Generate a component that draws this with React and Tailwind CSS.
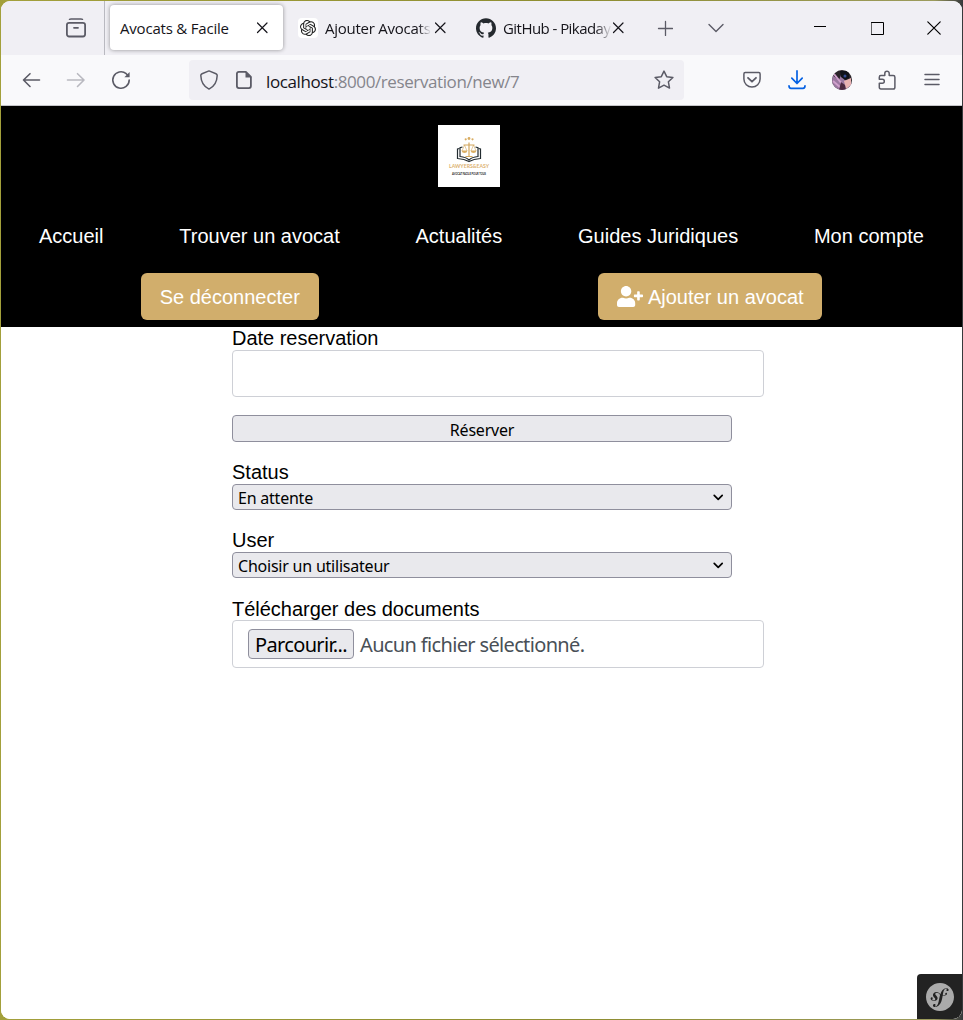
import React from "react";
import { SiOpenai, SiSymfony, SiGithub } from "react-icons/si";
import { FaUserPlus } from "react-icons/fa";

function Icon({ size = 20, className = "", sw = 1.4, children }) {
  return (
    <svg width={size} height={size} viewBox={`0 0 ${size} ${size}`} fill="none" stroke="currentColor" strokeWidth={sw} strokeLinecap="round" strokeLinejoin="round" className={`shrink-0 ${className}`}>
      {children}
    </svg>
  );
}

const CloseX = ({ className = "" }) => (
  <Icon size={12} sw={1.2} className={`text-[#15141a] ${className}`}>
    <path d="M1.500 1l9.500 9.500M11 1L1.500 10.500" />
  </Icon>
);

function TabBar() {
  return (
    <div className="flex h-[54px] shrink-0 items-center bg-[#f0eff4] text-[#5b5b66]">
      <div className="flex h-full w-[104px] shrink-0 items-center border-r border-[#b9b9c0] pl-[65px]">
        <Icon sw={1.8}>
          <path d="M3.500 1.300Q4.200.9 5 .9H15Q15.800.9 16.500 1.300" strokeWidth="1.500" />
          <rect x="0.9" y="4.900" width="18.200" height="13.600" rx="2.200" />
          <path d="M8 9.800h4" />
        </Icon>
      </div>
      <div className="mb-px ml-[5px] flex h-[45px] w-[173px] shrink-0 items-center justify-between rounded bg-white pr-[15px] pl-[10px] shadow-[0_0_4px_rgba(0,0,0,0.4)]">
        <span className="mt-px font-['Open_Sans',sans-serif] text-[15px] tracking-[-0.2px] whitespace-nowrap text-[#15141a]">Avocats &amp; Facile</span>
        <CloseX className="mt-px" />
      </div>
      <div className="ml-[15px] flex size-5 shrink-0 items-center justify-center rounded bg-white text-[#222]">
        <SiOpenai size={16} />
      </div>
      <div className="ml-[7px] w-[106px] shrink-0 font-['Open_Sans',sans-serif] text-[15px] tracking-[-0.25px] whitespace-nowrap text-[#15141a] [mask-image:linear-gradient(to_right,#000_88%,transparent)]">Ajouter Avocats</div>
      <CloseX className="ml-[3px]" />
      <SiGithub size={20} className="ml-[30px] shrink-0 text-[#24292e]" />
      <div className="ml-[7px] w-[109px] shrink-0 font-['Open_Sans',sans-serif] text-[15px] tracking-[-0.55px] whitespace-nowrap text-[#15141a] [mask-image:linear-gradient(to_right,#000_85%,transparent)]">GitHub - Pikaday</div>
      <CloseX />
      <Icon size={16} sw={1.3} className="ml-[33px]"><path d="M8.500 1.500v14M1.500 8.500h14" /></Icon>
      <Icon size={16} sw={1.4} className="ml-[35px]"><path d="M1 4.500l7 7 7-7" /></Icon>
      <Icon size={12} sw={1} className="ml-[90px] text-black"><path d="M0 4.500h12" /></Icon>
      <Icon size={13} sw={1} className="ml-[45px] text-black"><path d="M.5.500h12v12H.5z" /></Icon>
      <Icon size={14} sw={1.2} className="ml-[43px] text-black"><path d="M.8.800l12.400 12.400M13.200.800L.8 13.200" /></Icon>
    </div>
  );
}

function Toolbar() {
  return (
    <div className="flex h-[51px] shrink-0 items-center border-b border-[#c4c4c8] bg-[#f9f9fb] pl-[20px] text-[#5b5b66]">
      <Icon sw={1.6}><path d="M18.500 10H2.500M9 3.700L2.500 10l6.500 6.500" /></Icon>
      <Icon sw={1.6} className="ml-[25px] text-[#b9b9c0]"><path d="M1.500 10h16M11.500 3.700L18 10l-6.500 6.500" /></Icon>
      <Icon sw={1.6} className="ml-[25px]">
        <path d="M18.200 10a8.200 8.200 0 1 1-3-6.300l2 2" />
        <path d="M18.600 2v5.200h-5.200z" fill="currentColor" stroke="none" />
      </Icon>
      <div className="ml-[58px] flex h-10 w-[495px] items-center rounded bg-[#f0eff4] pl-[10px]">
        <Icon sw={1.5}><path d="M10 .9l7 2.800q1.200.5 1.200 1.800C18 11.500 15.500 16.500 10 19.100 4.500 16.500 2 11.500 1.800 5.500q0-1.300 1.200-1.800z" /></Icon>
        <Icon sw={1.8} className="ml-[15px]">
          <path d="M4.900 1.800h7l5 5v9.300q0 2-2 2H4.900q-2 0-2-2V3.800q0-2 2-2z" />
          <path d="M11.500 1.500v6h6z" fill="currentColor" stroke="none" />
        </Icon>
        <span className="mt-[3px] ml-[12px] w-[300px] font-['Open_Sans',sans-serif] text-[17px] tracking-[-0.4px] whitespace-nowrap text-[#85858c]"><span className="text-[#15141a]">localhost</span>:8000/reservation/new/7</span>
        <Icon sw={1.5} className="ml-[88px]"><path d="M10 1.100l2.700 5.600 6.200.8-4.500 4.300 1.100 6.300L10 15.200l-5.500 2.900 1.100-6.300L1.100 7.500l6.200-.8z" /></Icon>
      </div>
      <Icon sw={1.5} className="ml-[58px]">
        <path d="M3.200 2.500h13.600q1.300 0 1.300 1.500v5a8.100 8.100 0 0 1-16.200 0V4q0-1.500 1.300-1.500z" />
        <path d="M6 7.800l4 3.900 4-3.900" strokeWidth="1.800" />
      </Icon>
      <Icon sw={1.7} className="ml-[25px] text-[#0561e3]">
        <path d="M10 .9v12.200M4.800 8.200l5.200 5.300 5.200-5.300M2 15.800q0 2.500 2 2.500h12q2 0 2-2.500" />
      </Icon>
      <svg className="ml-[25px] shrink-0" width="20" height="20" viewBox="0 0 20 20">
        <defs><clipPath id="av"><circle cx="10" cy="10" r="10" /></clipPath></defs>
        <g clipPath="url(#av)">
          <rect width="20" height="20" fill="#2a2429" />
          <path d="M0 5l7 5 2-5 4 5 7 3v7H0z" fill="#9b78a0" />
          <path d="M2 4l8 10M1 11l8 7" stroke="#d0a0cc" strokeWidth="2" />
          <path d="M12 11l7-3v7l-5 4z" fill="#e9b3b2" />
          <path d="M8 1h9v7l-4 2-4-3z" fill="#11131a" />
          <circle cx="13" cy="6" r="1.500" fill="#334c94" />
          <path d="M9 12l4 3 1 5H7z" fill="#4b2940" />
        </g>
      </svg>
      <Icon sw={1.5} className="ml-[25px]">
        <path d="M3.800 5.500h4V3.400a2.200 2.200 0 0 1 4.400 0v2.100h4q1.700 0 1.700 1.700v10q0 1.800-1.700 1.800H4q-1.700 0-1.700-1.700v-4.100h3a2 2 0 0 0 0-4H2.300V7.200q0-1.700 1.500-1.700z" />
      </Icon>
      <Icon size={16} sw={1.5} className="ml-[27px]"><path d="M1 2.500h14M1 7.500h14M1 12.500h14" /></Icon>
    </div>
  );
}

function Logo() {
  return (
    <svg width="62" height="62" viewBox="0 0 62 62" className="mt-[19px] ml-[437px]">
      <rect width="62" height="62" fill="#fff" />
      <g fill="#d9ad62">
        <circle cx="27.700" cy="14.300" r="1.100" /><circle cx="31" cy="13.500" r="1.400" /><circle cx="34.500" cy="14.300" r="1.100" />
        <path d="M23.500 25.500h6q-.5 2.500-3 2.500t-3-2.500zM32.500 25.500h6q-.5 2.500-3 2.500t-3-2.500z" />
      </g>
      <g fill="none" stroke="#d2a65c">
        <path d="M31 17.500v14M25.500 20h11M27.500 31.500h7" strokeWidth="1.200" />
        <path d="M26.500 20l-2.500 6M26.500 20l2.500 6M35.500 20l-2.500 6M35.500 20l2.500 6" strokeWidth=".6" />
      </g>
      <g fill="none" stroke="#222b30">
        <path d="M24.500 22l-2.500.700v8.800q6 .5 9 3.500 3-3 9-3.500v-8.800l-2.500-.7" strokeWidth="1.200" />
        <path d="M21.500 23.500l-2 .5v9.500q7 .5 11.500 3 4.500-2.500 11.500-3V24l-2-.5" strokeWidth="1.200" />
      </g>
      <text x="31" y="43.200" textAnchor="middle" textLength="40" lengthAdjust="spacingAndGlyphs" fontSize="5" fontWeight="bold" fill="#dcb271" fontFamily="Lato, sans-serif">LAWYERS&amp;EASY</text>
      <text x="31" y="49.800" textAnchor="middle" textLength="34" lengthAdjust="spacingAndGlyphs" fontSize="2.800" fontWeight="bold" fill="#222" fontFamily="Lato, sans-serif">AVOCAT FACILE POUR TOUS</text>
    </svg>
  );
}

function Header() {
  return (
    <header className="flex h-[221px] shrink-0 flex-col bg-black text-xl leading-[23px] text-white">
      <Logo />
      <nav className="mt-[38px] flex justify-between px-[38px]">
        <a>Accueil</a>
        <a>Trouver un avocat</a>
        <a>Actualités</a>
        <a>Guides Juridiques</a>
        <a>Mon compte</a>
      </nav>
      <div className="mt-[25px] flex justify-around">
        <button className="flex h-[47px] w-[178px] items-center justify-center rounded-md bg-[#d1ae6c] pt-[2px]">Se déconnecter</button>
        <button className="flex h-[47px] w-[224px] items-center justify-center gap-[5px] rounded-md bg-[#d1ae6c] pt-[2px]">
          <FaUserPlus size={26} className="mb-[2px] h-[21px]" />
          Ajouter un avocat
        </button>
      </div>
    </header>
  );
}

function Select({ children }) {
  return (
    <div className="mb-[19px] flex h-[26px] w-[500px] shrink-0 items-center justify-between rounded border border-[#8f8f9d] bg-[#e9e9ed] pr-[7px] pl-[5px] font-['Noto_Sans',sans-serif] text-[16px] tracking-[-0.22px]">
      <span className="mt-[3px] whitespace-nowrap">{children}</span>
      <Icon size={12} sw={1.7}><path d="M2.200 4.300l4 4 4-4" /></Icon>
    </div>
  );
}

function ReservationForm() {
  return (
    <main className="flex flex-1 flex-col bg-white pl-[231px] text-xl leading-[23px] text-black">
      <label className="h-[23px] tracking-[-0.02px]">Date reservation</label>
      <div className="h-[47px] w-[532px] rounded border border-[#ced0d6]" />
      <button className="mt-[18px] mb-[19px] flex h-[27px] w-[500px] items-center justify-center rounded border border-[#8f8f9d] bg-[#e9e9ed] pt-[3px] font-['Noto_Sans',sans-serif] text-[16px] tracking-[-0.22px]">Réserver</button>
      <label className="h-[23px]">Status</label>
      <Select>En attente</Select>
      <label className="h-[23px]">User</label>
      <Select>Choisir un utilisateur</Select>
      <label className="h-[23px] pt-px tracking-[-0.02px]">Télécharger des documents</label>
      <div className="flex h-[48px] w-[532px] items-center rounded border border-[#ced0d6] pl-[15px] font-['Noto_Sans',sans-serif] text-[20px] tracking-[-0.65px]">
        <button className="flex h-[30px] w-[106px] items-center justify-center rounded border border-[#8f8f9d] bg-[#e9e9ed]">Parcourir...</button>
        <span className="ml-[6px] text-[#495057]">Aucun fichier sélectionné.</span>
      </div>
      <div className="mt-auto flex h-[45px] w-[45px] items-center self-end rounded-tl bg-[#222] pl-[9px]">
        <SiSymfony size={28} className="text-[#aaa]" />
      </div>
    </main>
  );
}

export default function App() {
  return (
    <div className="h-[1020px] w-[963px] bg-[linear-gradient(to_right,#a3a03b_0,#8e8d30_60%,#9c9b5c_97%,#36383c_100%)] p-px font-['Liberation_Sans',Arial,sans-serif]">
      <div className="flex h-[1018px] w-[961px] flex-col overflow-hidden rounded-[9px] bg-white">
        <TabBar />
        <Toolbar />
        <Header />
        <ReservationForm />
      </div>
    </div>
  );
}
